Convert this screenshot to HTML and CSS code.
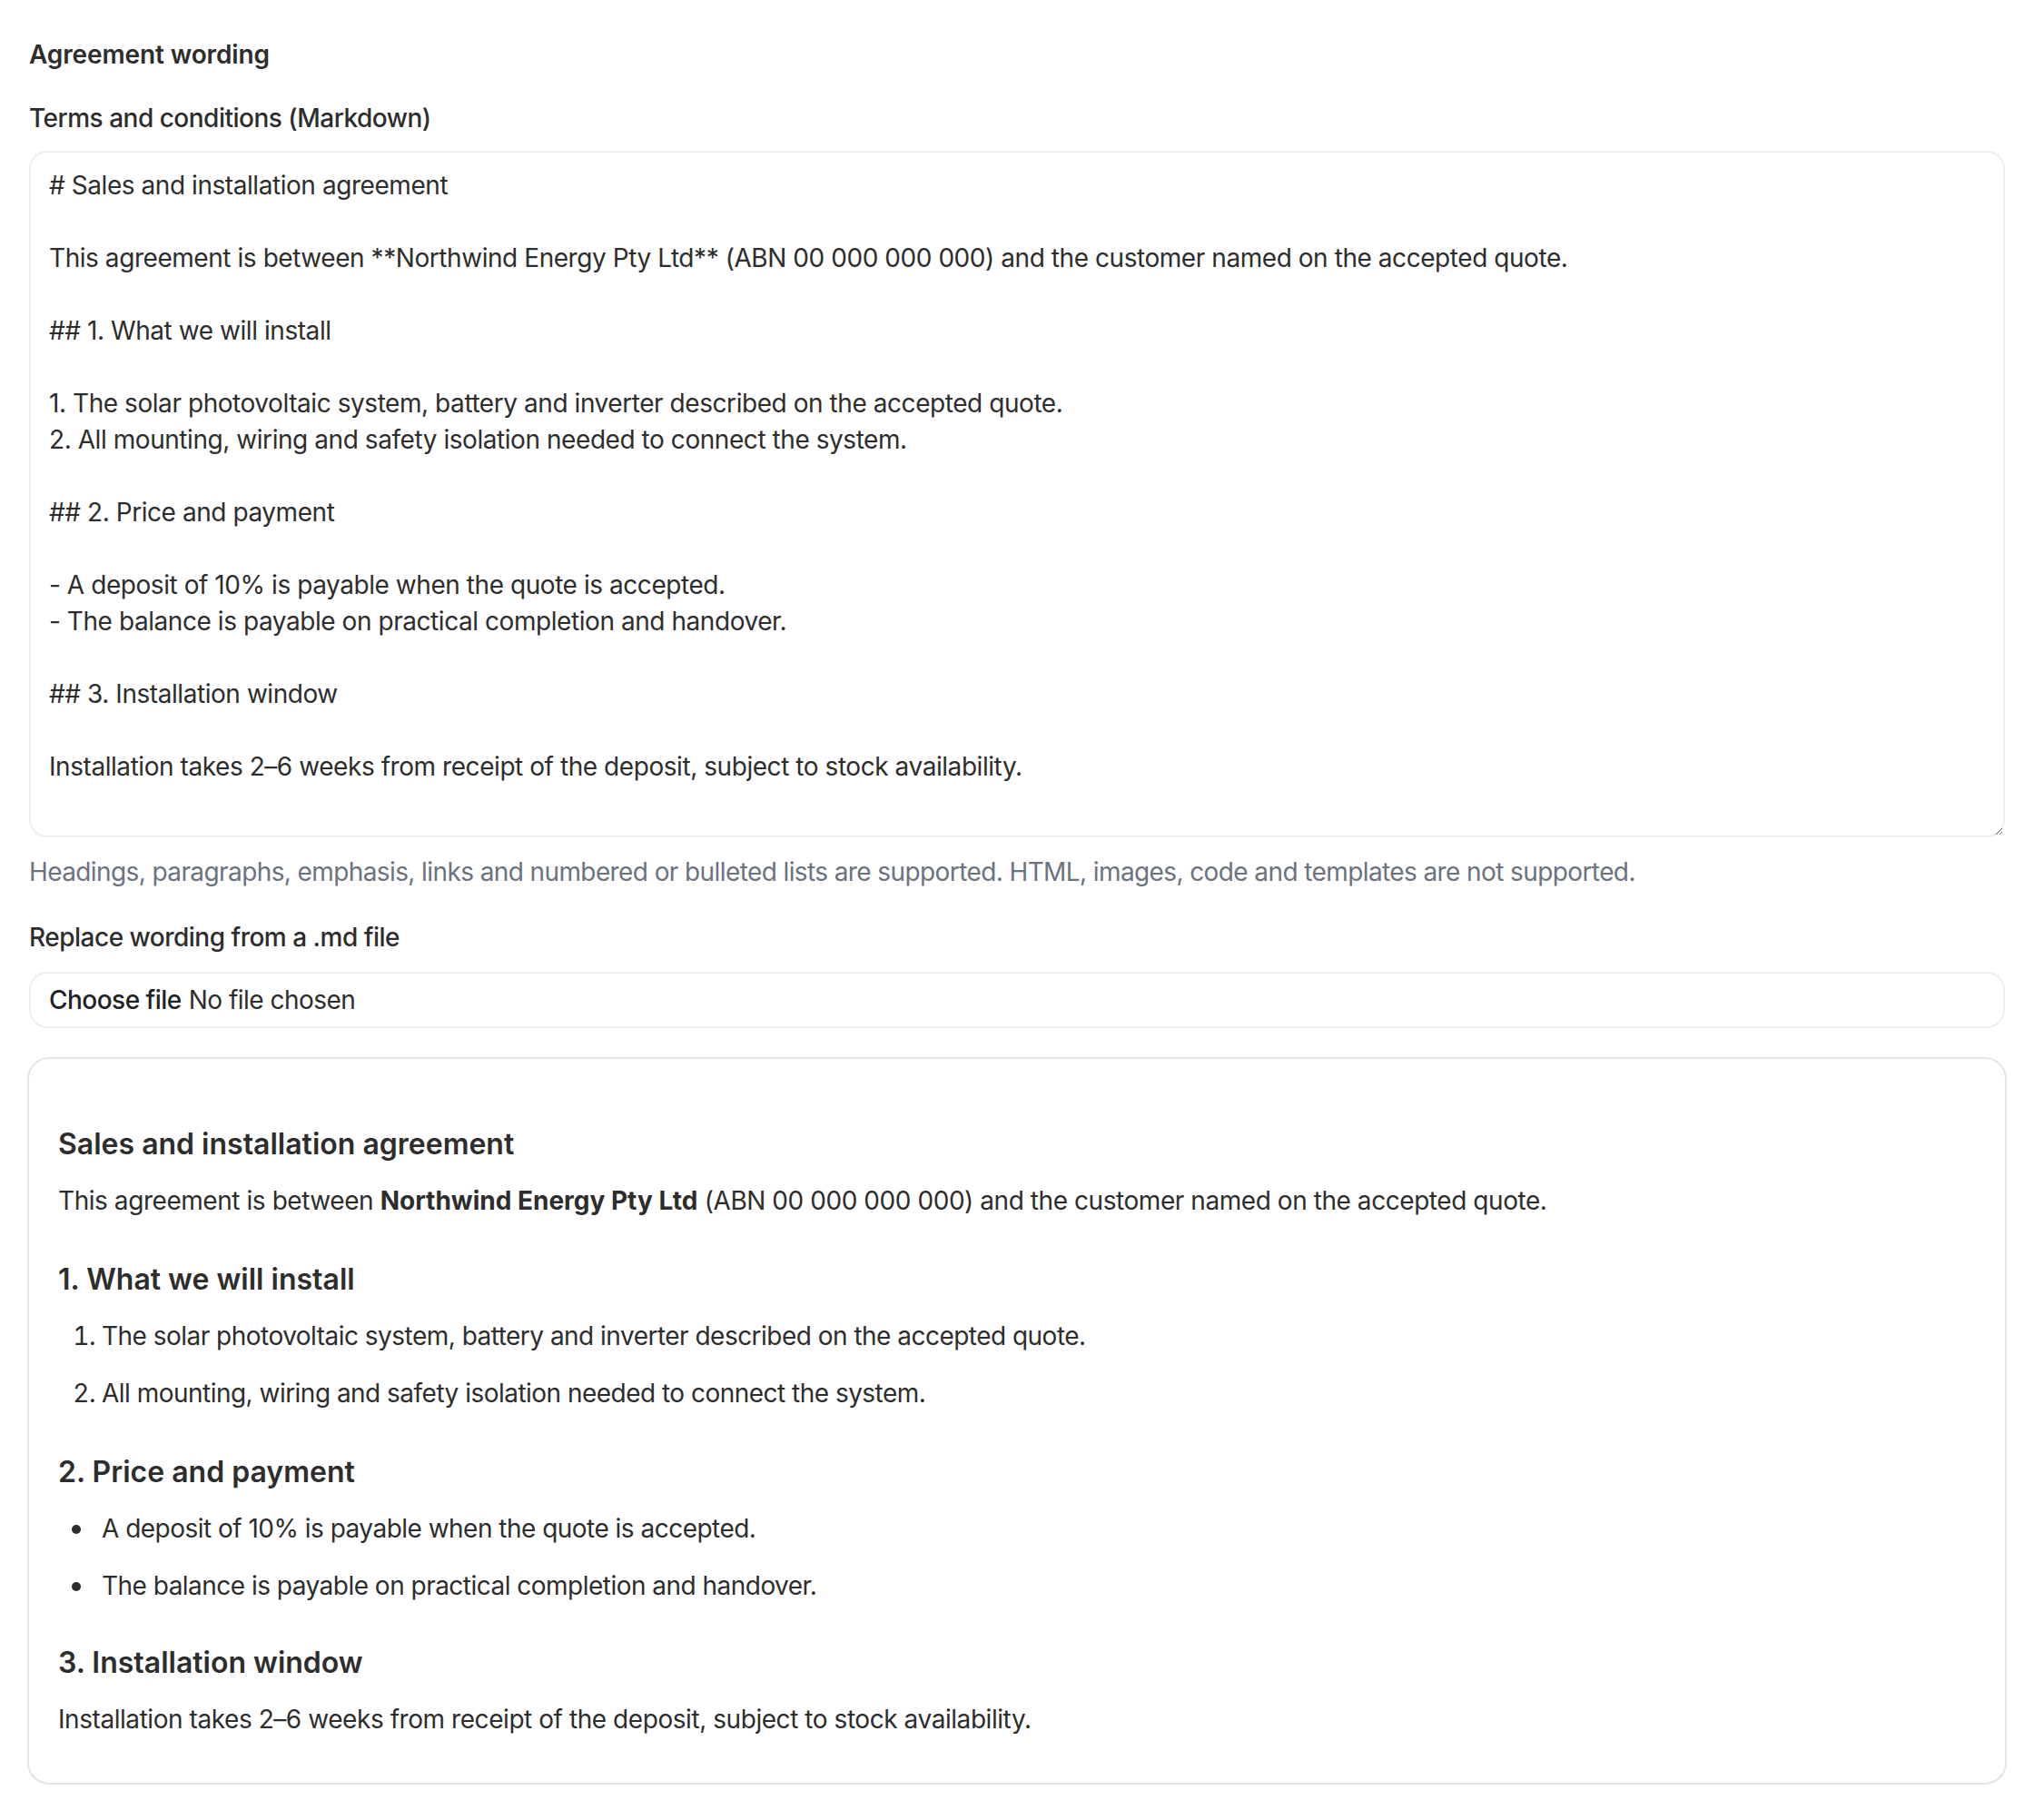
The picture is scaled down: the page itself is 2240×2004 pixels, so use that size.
FILE: index.html
```html
<!DOCTYPE html>
<html lang="en">
<head>
<meta charset="utf-8">
<title>Agreement wording</title>
<link rel="stylesheet" href="styles.css">
</head>
<body>
<main class="page">
  <h3 class="section-title">Agreement wording</h3>
  <label class="field-label" for="terms">Terms and conditions (Markdown)</label>
  <textarea id="terms" class="md-input">
# Sales and installation agreement

This agreement is between **Northwind Energy Pty Ltd** (ABN 00 000 000 000) and the customer named on the accepted quote.

## 1. What we will install

1. The solar photovoltaic system, battery and inverter described on the accepted quote.
2. All mounting, wiring and safety isolation needed to connect the system.

## 2. Price and payment

- A deposit of 10% is payable when the quote is accepted.
- The balance is payable on practical completion and handover.

## 3. Installation window

Installation takes 2–6 weeks from receipt of the deposit, subject to stock availability.
</textarea>
  <p class="help">Headings, paragraphs, emphasis, links and numbered or bulleted lists are supported. HTML, images, code and templates are not supported.</p>
  <label class="field-label field-label--spaced">Replace wording from a .md file</label>
  <label class="file-input">
    <span class="file-btn">Choose file</span>
    <span class="file-name">No file chosen</span>
    <input type="file" accept=".md" class="file-native">
  </label>
  <article class="preview">
    <h1 class="pv-h">Sales and installation agreement</h1>
    <p class="pv-p">This agreement is between <strong>Northwind Energy Pty Ltd</strong> (ABN 00 000 000 000) and the customer named on the accepted quote.</p>
    <h2 class="pv-h">1. What we will install</h2>
    <ol class="pv-list">
      <li>The solar photovoltaic system, battery and inverter described on the accepted quote.</li>
      <li>All mounting, wiring and safety isolation needed to connect the system.</li>
    </ol>
    <h2 class="pv-h">2. Price and payment</h2>
    <ul class="pv-list pv-list--bullets">
      <li>A deposit of 10% is payable when the quote is accepted.</li>
      <li>The balance is payable on practical completion and handover.</li>
    </ul>
    <h2 class="pv-h pv-h--last">3. Installation window</h2>
    <p class="pv-p">Installation takes 2–6 weeks from receipt of the deposit, subject to stock availability.</p>
  </article>
</main>
</body>
</html>
```
FILE: styles.css
```css
html {
  zoom: 2;
}

body {
  margin: 0;
  background: #ffffff;
  color: #2d2d2d;
  font-family: Inter, "Noto Sans", "Liberation Sans", sans-serif;
  font-size: 14px;
  line-height: 20px;
  letter-spacing: -0.26px;
}

.page {
  padding: 20px 16px 20px;
  display: flex;
  flex-direction: column;
}

.section-title {
  margin: 0 0 15px;
  font-size: 14px;
  line-height: 20px;
  font-weight: 600;
  letter-spacing: -0.06px;
}

.field-label {
  display: block;
  margin: 0 0 8px;
  font-weight: 500;
  letter-spacing: -0.25px;
}

.field-label--spaced {
  margin-top: 16px;
  margin-bottom: 9px;
}

.md-input {
  display: block;
  box-sizing: border-box;
  width: 100%;
  height: 378px;
  margin: 0;
  padding: 8px 10px;
  border: 1px solid #eeeeee;
  border-radius: 10px;
  background: #ffffff;
  color: #2d2d2d;
  font-family: inherit;
  font-size: 14px;
  line-height: 20px;
  letter-spacing: -0.22px;
  resize: vertical;
  outline: none;
}

.help {
  margin: 9px 0 0;
  color: #6b7280;
  letter-spacing: -0.3px;
}

.file-input {
  box-sizing: border-box;
  height: 31px;
  display: flex;
  align-items: center;
  gap: 4px;
  padding: 0 10px;
  border: 1px solid #eeeeee;
  border-radius: 10px;
  cursor: pointer;
}

.file-btn {
  font-weight: 500;
  color: #222222;
}

.file-name {
  color: #2d2d2d;
}

.file-native {
  display: none;
}

.preview {
  margin-top: 16px;
  padding: 16px 16px 25px 16px;
  border: 1px solid #e4e4e4;
  border-radius: 12px;
  margin-left: -1px;
  margin-right: -1px;
}

.pv-h {
  margin: 21.5px 0 9px;
  font-size: 16px;
  line-height: 24px;
  font-weight: 600;
  letter-spacing: 0;
  color: #2d2d2d;
}

.pv-h:first-child {
  margin-top: 19px;
}

.pv-h--last {
  margin-top: 20.5px;
}

.pv-p {
  margin: 0;
  letter-spacing: -0.22px;
}

.pv-p strong {
  font-weight: 700;
  letter-spacing: 0;
}

.pv-list {
  margin: 0;
  padding-left: 24px;
}

.pv-list li + li {
  margin-top: 11.5px;
}

.pv-list--bullets {
  list-style: none;
}

.pv-list--bullets li {
  position: relative;
}

.pv-list--bullets li::before {
  content: "";
  position: absolute;
  left: -16.5px;
  top: 8px;
  width: 5px;
  height: 5px;
  border-radius: 50%;
  background: #2d2d2d;
}
```
